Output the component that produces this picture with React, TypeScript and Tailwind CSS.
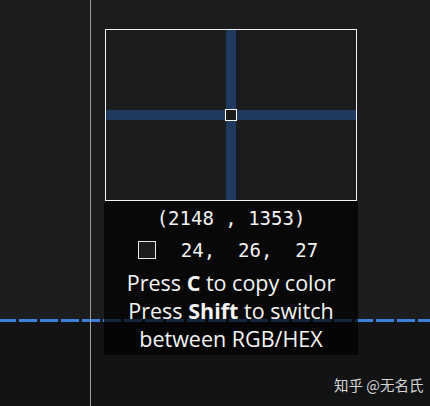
import React from "react";

export default function App() {
  return (
    <div className="relative w-[430px] h-[406px] overflow-hidden flex flex-col bg-[#121314]">
      {/* background canvas */}
      <div className="h-[319px] bg-[#1b1c1e]" />
      <div className="h-[3px] bg-[repeating-linear-gradient(90deg,#3d7fd8_0_16px,#1a1f26_16px_19px,#3d7fd8_19px_21px)]" />
      <div className="flex-1 bg-[#121314]" />

      {/* vertical guide */}
      <div className="absolute left-[90px] top-0 h-full w-px bg-[#9c9c9c]" />

      {/* magnifier + info panel */}
      <div className="absolute left-[104px] top-[29px] w-[254px] flex flex-col">
        <div className="mx-px h-[172px] border border-[#f2f2f2] bg-[#1b1c1e] flex flex-col items-center relative">
          <div className="absolute left-[120px] top-0 h-full w-[10px] bg-[#1f3a5e]" />
          <div className="absolute left-0 top-[80px] w-full h-[10px] bg-[#1f3a5e]" />
          <div className="absolute left-[119px] top-[79px] w-[12px] h-[12px] border border-white bg-[#1c1b1b]" />
        </div>
        <div className="bg-black/70 flex flex-col items-center pt-[4px] pb-[2px] text-[#f2f2f2]">
          <div className="h-[26px] flex items-center font-['DejaVu_Sans_Mono','Liberation_Mono',monospace] text-[19px] whitespace-pre">
            (2148 , 1353)
          </div>
          <div className="mt-[9px] h-[20px] flex items-center gap-[25px] -ml-[6px]">
            <div className="w-[18px] h-[18px] border border-[#e8e8e8] bg-[#1b1c1d]" />
            <span className="font-['DejaVu_Sans_Mono','Liberation_Mono',monospace] text-[19px] whitespace-pre">
              24,  26,  27
            </span>
          </div>
          <div className="mt-[9px] flex flex-col items-center font-['Open_Sans','Noto_Sans',sans-serif] text-[21.5px] leading-[28px] text-[#f4f4f4] whitespace-nowrap">
            <div>
              Press <b className="font-bold">C</b> to copy color
            </div>
            <div>
              Press <b className="font-bold">Shift</b> to switch
            </div>
            <div>between RGB/HEX</div>
          </div>
        </div>
      </div>

      {/* watermark */}
      <div className="absolute left-[334px] top-[376px] text-[14.5px] leading-[18px] text-[#d6d6d6] font-['Noto_Sans_CJK_SC',sans-serif] whitespace-pre">
        知乎 @无名氏
      </div>
    </div>
  );
}
